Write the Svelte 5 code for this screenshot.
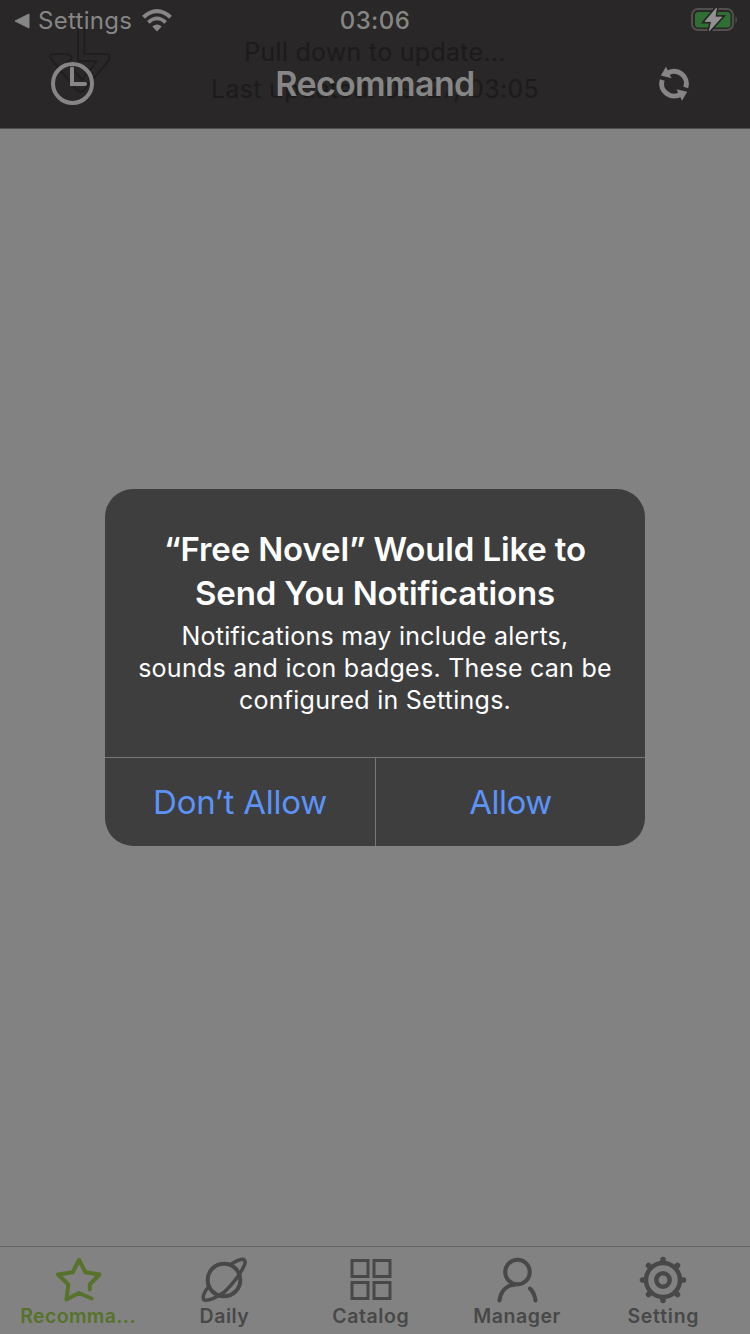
<script>
  const tabs = [
    { id: 'recommend', label: 'Recomma...' },
    { id: 'daily', label: 'Daily' },
    { id: 'catalog', label: 'Catalog' },
    { id: 'manager', label: 'Manager' },
    { id: 'setting', label: 'Setting' }
  ];
  const spokes = [0, 45, 90, 135, 180, 225, 270, 315];
</script>

<div class="screen">
  <header>
    <div class="hint">
      <svg class="arrow" width="64" height="100" viewBox="0 0 64 100" fill="none" stroke="#201e1e" stroke-width="2" stroke-linejoin="round">
        <path d="M29 28V61H48L33 80L18 62Q24 60 22 56Q20 54 16 54H3Q0 56 3 60L27 89Q32 94 36 89L60 60Q62 54 58 54H35.500V28" />
      </svg>
      <p class="pull">Pull down to update...</p>
      <p class="last">Last updated: 09-27, 03:05</p>
    </div>
    <div class="status">
      <div class="left">
        <svg width="16" height="16" viewBox="0 0 16 16"><path d="M1 8L15 1V15Z" fill="#868686" stroke="#868686" stroke-linejoin="round" /></svg>
        <span class="back">Settings</span>
        <svg width="30" height="23" viewBox="0 0 30 23" fill="none" stroke="#868686">
          <path d="M1.500 8.200Q15-4 28.500 8.200" stroke-width="4" />
          <path d="M6.300 13.400Q15 5.500 23.700 13.400" stroke-width="3.600" />
          <path d="M10.300 17.500Q15 13.500 19.700 17.500L15 22.500Z" fill="#868686" stroke="none" />
        </svg>
      </div>
      <span class="clock">03:06</span>
      <div class="right">
        <svg width="50" height="26" viewBox="0 0 50 26">
          <rect x="3" y="2" width="41" height="21" rx="6" fill="none" stroke="#514f50" stroke-width="2" />
          <rect x="6" y="5" width="35.500" height="15.500" rx="3.500" fill="#2f6f33" />
          <path d="M46.500 9Q49.500 12.500 46.500 16.500Z" fill="#514f50" />
          <path d="M27.500 1L16 14.500H22.500L20.300 23.800L32.800 10H26Z" fill="#919191" stroke="#292727" stroke-width="4" paint-order="stroke" />
          <path d="M27.500 1L16 14.500H22.500L20.300 23.800L32.800 10H26Z" fill="#919191" stroke="#919191" stroke-width="0.700" stroke-linejoin="round" />
        </svg>
      </div>
    </div>
    <div class="nav">
      <svg width="44" height="44" viewBox="0 0.5 44 44" fill="none" stroke="#868686">
        <circle cx="21.500" cy="22" r="19.500" stroke-width="4" />
        <path d="M21 7V22.500H34" stroke-width="4" stroke-linecap="round" />
      </svg>
      <h1>Recommand</h1>
      <svg width="32" height="36" viewBox="0 0 32 36">
        <g fill="none" stroke="#868686" stroke-width="5">
          <path d="M9 7.500A12.400 12.400 0 0 1 27.800 21.500" />
          <path d="M23 27.900A12.400 12.400 0 0 1 4.200 13.900" />
        </g>
        <path d="M8 0.700L2.800 9.600L13.500 12.200Z M24 34.700L29.200 25.800L18.500 23.200Z" fill="#868686" />
      </svg>
    </div>
  </header>

  <main>
    <section class="alert">
      <div class="message">
        <h2><span>“Free Novel” Would Like to</span><span>Send You Notifications</span></h2>
        <p><span>Notifications may include alerts,</span><span>sounds and icon badges. These can be</span><span>configured in Settings.</span></p>
      </div>
      <div class="actions">
        <button>Don’t Allow</button>
        <button class="allow">Allow</button>
      </div>
    </section>
  </main>

  <nav class="tabs">
    {#each tabs as tab}
      <a class={tab.id}>
        <svg width="50" height="50" viewBox="-0.5 0 50 50" fill="none" stroke="currentColor" stroke-width="4" stroke-linecap="round" stroke-linejoin="round">
          {#if tab.id === 'recommend'}
            <path d="M38 43.500L25.500 38L13 44.500L14.800 29.500L4.500 19.500L19.200 17.300L25.500 4.800L32 17.300L46 19.500L36.300 29.500V34.500" />
          {:else if tab.id === 'daily'}
            <circle cx="24.500" cy="25" r="16.300" />
            <path d="M31 9.500Q40 4 44 4.300Q47 5.500 44.500 11Q39 23 25 37Q10 47 4.500 45Q1.500 41 9.500 31" stroke-width="3.500" />
          {:else if tab.id === 'catalog'}
            <path d="M5.500 5.500H21.500V21.500H5.500Z M27.500 5.500H43.500V21.500H27.500Z M5.500 27.500H21.500V43.500H5.500Z M27.500 27.500H43.500V43.500H27.500Z" stroke-width="3" stroke-linejoin="miter" />
          {:else if tab.id === 'manager'}
            <circle cx="25" cy="17" r="12.300" />
            <path d="M7 45.500C8 36 14 30 23 29.500M37.500 33.500Q42 38 43 45.500" />
          {:else}
            <circle cx="24.500" cy="25" r="17" stroke-width="4.500" />
            <circle cx="24.500" cy="25" r="6.700" stroke-width="4.500" />
            {#each spokes as angle}
              <path d="M24.500 7V4.500" stroke-width="5.500" transform="rotate({angle} 24.5 25)" />
            {/each}
          {/if}
        </svg>
        <span>{tab.label}</span>
      </a>
    {/each}
  </nav>
</div>

<style>
  :global(body) { margin: 0; }
  * { box-sizing: border-box; }
  h1, h2, p { margin: 0; }
  .screen {
    width: 750px;
    height: 1334px;
    display: flex;
    flex-direction: column;
    overflow: hidden;
    background: #828282;
    font-family: Inter, sans-serif;
  }
  header {
    position: relative;
    height: 129px;
    background: #292727;
    border-bottom: 1px solid #525151;
    overflow: hidden;
  }
  .hint { position: absolute; inset: 0; color: #1c1b1b; text-align: center; font-size: 25px; line-height: 36px; }
  .arrow { position: absolute; left: 49px; top: 0; }
  .hint p { white-space: nowrap; }
  .pull { padding-top: 34px; letter-spacing: 0.28px; }
  .last { padding-top: 1px; letter-spacing: 0.32px; }
  .status, .nav { position: relative; display: grid; grid-template-columns: 1fr auto 1fr; align-items: center; color: #868686; }
  .status { height: 40px; padding: 0 11px 0 14px; }
  .left { display: flex; align-items: center; gap: 8px; padding-top: 1px; }
  .left svg:last-child { margin-left: 2px; }
  .back { font-size: 24px; letter-spacing: 0.3px; }
  .clock { font-size: 24px; font-weight: 500; letter-spacing: 0.4px; padding-top: 1px; margin-right: 3px; }
  .right { display: flex; justify-content: flex-end; }
  .nav { height: 88px; padding: 0 60px 0 51px; }
  h1 { position: relative; left: 4.500px; top: -0.500px; font-size: 34px; font-weight: 600; letter-spacing: -0.65px; }
  .nav svg:last-child { justify-self: end; }
  main { flex: 1; display: flex; justify-content: center; align-items: flex-start; padding-top: 360px; }
  .alert { width: 540px; height: 357px; border-radius: 28px; background: #3e3e3e; overflow: hidden; display: flex; flex-direction: column; }
  .message { flex: 1; padding-top: 38px; color: #fff; text-align: center; }
  .message span { display: block; white-space: nowrap; }
  h2 { font-size: 33px; line-height: 44px; font-weight: 600; letter-spacing: -0.15px; }
  .message p { font-size: 25px; line-height: 32px; padding-top: 5px; letter-spacing: 0.26px; }
  .actions { display: grid; grid-template-columns: 271px 1fr; height: 89px; border-top: 1px solid #777; }
  button { border: 0; padding: 0; background: none; color: #5b93fb; font: 33px Inter, sans-serif; letter-spacing: -0.25px; }
  button:first-child { border-right: 1px solid #777; }
  .actions .allow { letter-spacing: -0.5px; }
  .tabs { height: 88px; border-top: 1px solid #636363; display: grid; grid-template-columns: repeat(5, 146.300px); padding: 8px 0 0 5px; }
  .tabs a { display: flex; flex-direction: column; align-items: center; color: #484848; }
  .tabs .recommend { color: #56722b; }
  .tabs span { font-size: 19.500px; font-weight: 600; line-height: 22px; letter-spacing: 0.55px; }
  .tabs .recommend span { letter-spacing: 0.35px; }
  .tabs .setting span { letter-spacing: 0.75px; }
</style>
